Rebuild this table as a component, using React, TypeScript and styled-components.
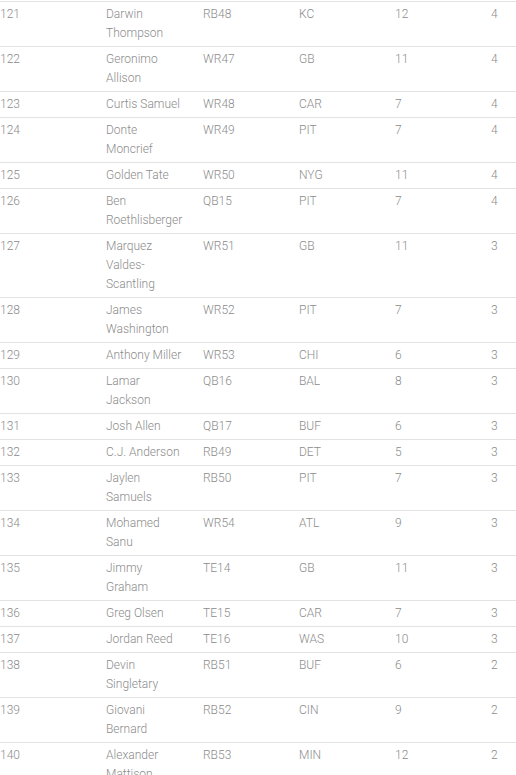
import React from 'react';
import styled, {createGlobalStyle} from "styled-components";

type PlayerType = {
    rank: number
    name: Array<string>
    pos: string
    team: string
    bye: number
    tier: number
}

const players: Array<PlayerType> = [
    {rank: 121, name: ['Darwin', 'Thompson'], pos: 'RB48', team: 'KC', bye: 12, tier: 4},
    {rank: 122, name: ['Geronimo', 'Allison'], pos: 'WR47', team: 'GB', bye: 11, tier: 4},
    {rank: 123, name: ['Curtis Samuel'], pos: 'WR48', team: 'CAR', bye: 7, tier: 4},
    {rank: 124, name: ['Donte', 'Moncrief'], pos: 'WR49', team: 'PIT', bye: 7, tier: 4},
    {rank: 125, name: ['Golden Tate'], pos: 'WR50', team: 'NYG', bye: 11, tier: 4},
    {rank: 126, name: ['Ben', 'Roethlisberger'], pos: 'QB15', team: 'PIT', bye: 7, tier: 4},
    {rank: 127, name: ['Marquez', 'Valdes-', 'Scantling'], pos: 'WR51', team: 'GB', bye: 11, tier: 3},
    {rank: 128, name: ['James', 'Washington'], pos: 'WR52', team: 'PIT', bye: 7, tier: 3},
    {rank: 129, name: ['Anthony Miller'], pos: 'WR53', team: 'CHI', bye: 6, tier: 3},
    {rank: 130, name: ['Lamar', 'Jackson'], pos: 'QB16', team: 'BAL', bye: 8, tier: 3},
    {rank: 131, name: ['Josh Allen'], pos: 'QB17', team: 'BUF', bye: 6, tier: 3},
    {rank: 132, name: ['C.J. Anderson'], pos: 'RB49', team: 'DET', bye: 5, tier: 3},
    {rank: 133, name: ['Jaylen', 'Samuels'], pos: 'RB50', team: 'PIT', bye: 7, tier: 3},
    {rank: 134, name: ['Mohamed', 'Sanu'], pos: 'WR54', team: 'ATL', bye: 9, tier: 3},
    {rank: 135, name: ['Jimmy', 'Graham'], pos: 'TE14', team: 'GB', bye: 11, tier: 3},
    {rank: 136, name: ['Greg Olsen'], pos: 'TE15', team: 'CAR', bye: 7, tier: 3},
    {rank: 137, name: ['Jordan Reed'], pos: 'TE16', team: 'WAS', bye: 10, tier: 3},
    {rank: 138, name: ['Devin', 'Singletary'], pos: 'RB51', team: 'BUF', bye: 6, tier: 2},
    {rank: 139, name: ['Giovani', 'Bernard'], pos: 'RB52', team: 'CIN', bye: 9, tier: 2},
    {rank: 140, name: ['Alexander', 'Mattison'], pos: 'RB53', team: 'MIN', bye: 12, tier: 2},
]

const GlobalStyle = createGlobalStyle`
    * {
        box-sizing: border-box;
    }

    html, body {
        margin: 0;
        padding: 0;
        background-color: #ffffff;
        overflow: hidden;
    }

    body {
        font-family: Roboto, "Liberation Sans", sans-serif;
    }
`

export default function App() {
    return (
        <>
            <GlobalStyle/>
            <StyledRankings>
                <StyledTable>
                    {players.map((item) => {
                        return <Row key={item.rank}>
                            <Cell>{item.rank}</Cell>
                            <Cell>{item.name.map((part, index) => {
                                return <NamePart key={index}>{part}</NamePart>
                            })}</Cell>
                            <Cell>{item.pos}</Cell>
                            <Cell>{item.team}</Cell>
                            <Cell>{item.bye}</Cell>
                            <Cell>{item.tier}</Cell>
                        </Row>
                    })}
                </StyledTable>
            </StyledRankings>
        </>
    );
}

const StyledRankings = styled.div`
    width: 100%;
    height: 775px;
    padding-top: 1px;
    overflow: hidden;
`

const StyledTable = styled.div`
    display: flex;
    flex-direction: column;
    border-top: 1px solid #e3e3e3;
`

const Row = styled.div`
    display: grid;
    grid-template-columns: 106px 97px 96px 96px 96px 1fr;
    border-bottom: 1px solid #e3e3e3;
`

const Cell = styled.div`
    padding: 3px 0 3px 0;
    font-size: 12px;
    font-weight: 300;
    line-height: 19px;
    color: #8c8c8c;
    letter-spacing: 0;
`

const NamePart = styled.span`
    display: block;
    white-space: nowrap;
`
